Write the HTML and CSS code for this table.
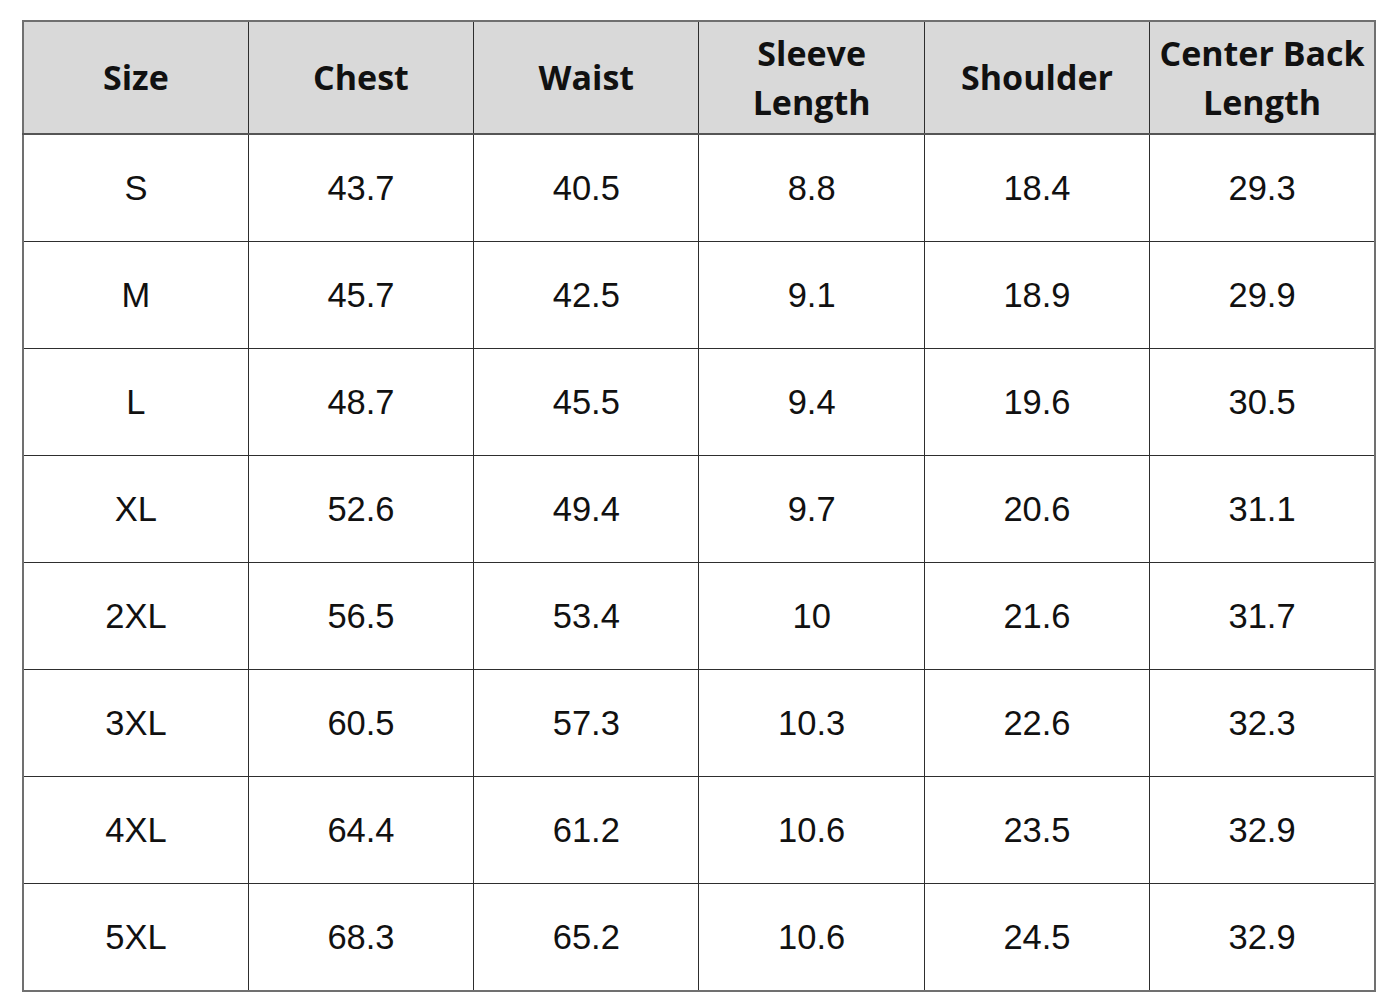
FILE: index.html
```html
<!DOCTYPE html>
<html>
<head>
<meta charset="utf-8">
<link rel="stylesheet" href="styles.css">
</head>
<body>
<table class="size-table">
  <thead>
    <tr>
      <th>Size</th>
      <th>Chest</th>
      <th>Waist</th>
      <th>Sleeve<br>Length</th>
      <th>Shoulder</th>
      <th>Center Back<br>Length</th>
    </tr>
  </thead>
  <tbody>
    <tr><td>S</td><td>43.7</td><td>40.5</td><td>8.8</td><td>18.4</td><td>29.3</td></tr>
    <tr><td>M</td><td>45.7</td><td>42.5</td><td>9.1</td><td>18.9</td><td>29.9</td></tr>
    <tr><td>L</td><td>48.7</td><td>45.5</td><td>9.4</td><td>19.6</td><td>30.5</td></tr>
    <tr><td>XL</td><td>52.6</td><td>49.4</td><td>9.7</td><td>20.6</td><td>31.1</td></tr>
    <tr><td>2XL</td><td>56.5</td><td>53.4</td><td>10</td><td>21.6</td><td>31.7</td></tr>
    <tr><td>3XL</td><td>60.5</td><td>57.3</td><td>10.3</td><td>22.6</td><td>32.3</td></tr>
    <tr><td>4XL</td><td>64.4</td><td>61.2</td><td>10.6</td><td>23.5</td><td>32.9</td></tr>
    <tr><td>5XL</td><td>68.3</td><td>65.2</td><td>10.6</td><td>24.5</td><td>32.9</td></tr>
  </tbody>
</table>
</body>
</html>
```
FILE: styles.css
```css
html, body {
  margin: 0;
  padding: 0;
  background: #ffffff;
}
body {
  padding: 20px 0 0 22px;
}
.size-table {
  border-collapse: collapse;
  table-layout: fixed;
  width: 1354px;
  border: 2px solid #707070;
  color: #111111;
}
.size-table th,
.size-table td {
  border: 1px solid #2e2e2e;
  text-align: center;
  vertical-align: middle;
  padding: 0;
}
.size-table th {
  background: #d9d9d9;
  font-family: "Open Sans", Lato, sans-serif;
  font-weight: 700;
  font-size: 34px;
  line-height: 49px;
  height: 111px;
  border-bottom: 2px solid #555555;
}
.size-table td {
  font-family: "Liberation Sans", Arial, sans-serif;
  font-size: 34.5px;
  height: 106px;
}
```
